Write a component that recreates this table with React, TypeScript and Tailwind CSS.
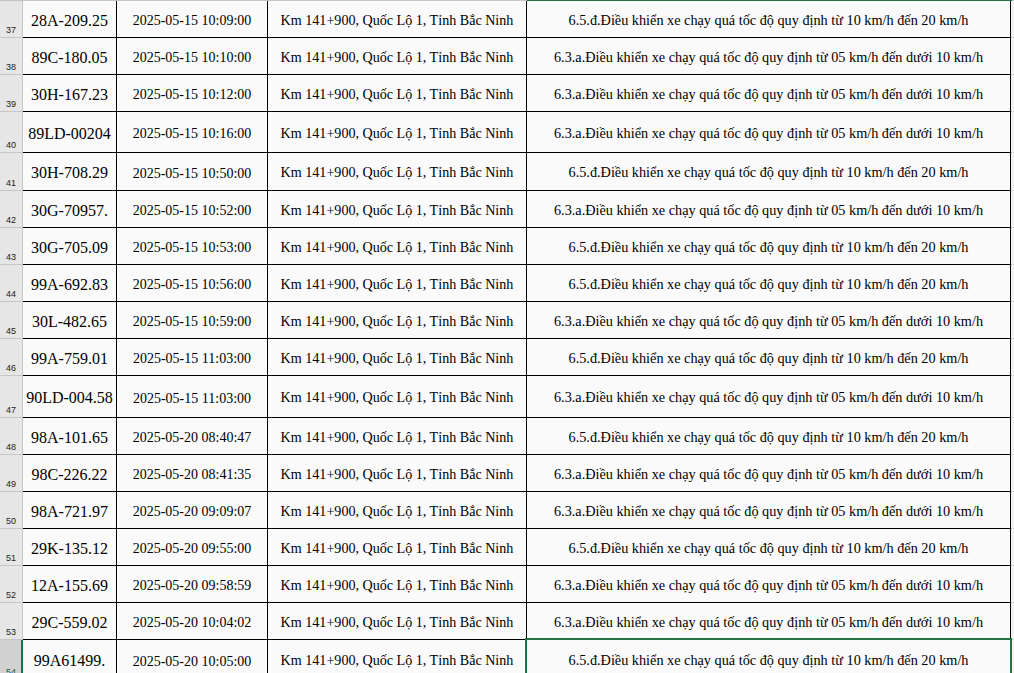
const rows = [
  {n: 37, h: 'h-[37px]', plate: '28A-209.25', time: '2025-05-15 10:09:00', v: 'd'},
  {n: 38, h: 'h-[37px]', plate: '89C-180.05', time: '2025-05-15 10:10:00', v: 'a'},
  {n: 39, h: 'h-[37px]', plate: '30H-167.23', time: '2025-05-15 10:12:00', v: 'a'},
  {n: 40, h: 'h-[41px]', plate: '89LD-00204', time: '2025-05-15 10:16:00', v: 'a'},
  {n: 41, h: 'h-[38px]', plate: '30H-708.29', time: '2025-05-15 10:50:00', v: 'd'},
  {n: 42, h: 'h-[37px]', plate: '30G-70957.', time: '2025-05-15 10:52:00', v: 'a'},
  {n: 43, h: 'h-[37px]', plate: '30G-705.09', time: '2025-05-15 10:53:00', v: 'd'},
  {n: 44, h: 'h-[37px]', plate: '99A-692.83', time: '2025-05-15 10:56:00', v: 'd'},
  {n: 45, h: 'h-[37px]', plate: '30L-482.65', time: '2025-05-15 10:59:00', v: 'a'},
  {n: 46, h: 'h-[37px]', plate: '99A-759.01', time: '2025-05-15 11:03:00', v: 'd'},
  {n: 47, h: 'h-[42px]', plate: '90LD-004.58', time: '2025-05-15 11:03:00', v: 'a'},
  {n: 48, h: 'h-[37px]', plate: '98A-101.65', time: '2025-05-20 08:40:47', v: 'd'},
  {n: 49, h: 'h-[37px]', plate: '98C-226.22', time: '2025-05-20 08:41:35', v: 'a'},
  {n: 50, h: 'h-[37px]', plate: '98A-721.97', time: '2025-05-20 09:09:07', v: 'a'},
  {n: 51, h: 'h-[37px]', plate: '29K-135.12', time: '2025-05-20 09:55:00', v: 'd'},
  {n: 52, h: 'h-[37px]', plate: '12A-155.69', time: '2025-05-20 09:58:59', v: 'a'},
  {n: 53, h: 'h-[37px]', plate: '29C-559.02', time: '2025-05-20 10:04:02', v: 'a'},
  {n: 54, h: 'h-[40px]', plate: '99A61499.', time: '2025-05-20 10:05:00', v: 'd'},
]

const PLACE = 'Km 141+900, Quốc Lộ 1, Tỉnh Bắc Ninh'
const VIOLATION: Record<string, string> = {
  d: '6.5.đ.Điều khiển xe chạy quá tốc độ quy định từ 10 km/h đến 20 km/h',
  a: '6.3.a.Điều khiển xe chạy quá tốc độ quy định từ 05 km/h đến dưới 10 km/h',
}

export default function App() {
  return (
    <div
      className="w-[1014px] h-[673px] overflow-hidden bg-[#f3f3f3] text-black"
      style={{fontFamily: '"Liberation Serif", "Times New Roman", serif'}}
    >
      {/* column header bottom edge */}
      <div className="flex h-[1px]">
        <div className="w-[527px] bg-[#c4c4c4]" />
        <div className="w-[485px] bg-[#217346]" />
        <div className="flex-1 bg-[#c4c4c4]" />
      </div>

      {rows.map((r) => {
        const sel = r.n === 54
        return (
          <div key={r.n} className={`flex ${r.h}`}>
            <div
              className={`relative w-[23px] shrink-0 flex items-end pl-[6px] pb-[2px] border-r border-b border-[#c6c6c6] text-[9px] leading-none ${sel ? 'bg-[#d2d2d2] text-[#1d5c39]' : 'bg-[#e6e6e6] text-[#222]'}`}
              style={{fontFamily: '"Liberation Sans", Arial, sans-serif'}}
            >
              {r.n}
              {sel && <div className="absolute -right-[1px] top-0 bottom-0 w-[2px] bg-[#217346]" />}
            </div>
            <div className="w-[94px] shrink-0 flex items-center justify-center bg-[#fafafa] border-r border-b border-black text-[16px] pt-[3px]">
              {r.plate}
            </div>
            <div className="w-[151px] shrink-0 flex items-center justify-center bg-[#fafafa] border-r border-b border-black text-[14px] pt-[3px]">
              {r.time}
            </div>
            <div className="w-[259px] shrink-0 flex items-center justify-center bg-[#fafafa] border-r border-b border-black text-[14.1px] pt-[3px]">
              {PLACE}
            </div>
            <div className="relative w-[484px] shrink-0 flex items-center justify-center bg-[#fafafa] border-r border-b border-black text-[14.25px] pt-[3px]">
              {VIOLATION[r.v]}
              {sel && (
                <div className="absolute -left-[2px] -top-[2px] -right-[2px] -bottom-[2px] border-2 border-[#217346] z-10" />
              )}
            </div>
            <div className="flex-1 bg-[#f3f3f3] border-b border-[#cfcfcf]" />
          </div>
        )
      })}
    </div>
  )
}
